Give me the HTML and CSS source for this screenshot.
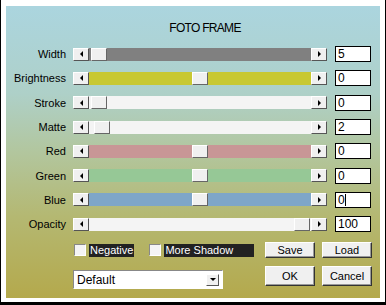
FILE: index.html
```html
<!DOCTYPE html>
<html lang="en">
<head>
    <meta charset="UTF-8">
    <title>Foto Frame</title>
    <link rel="stylesheet" href="styles.css">
</head>
<body>
    <div class="window">
        <div class="panel">
            <h1 class="title">FOTO FRAME</h1>
            <div class="rows">
                <div class="row">
                    <label>Width</label>
                    <div class="slider">
                        <span class="arrow left"></span>
                        <div class="track gray"><span class="thumb" style="left: 2px"></span></div>
                        <span class="arrow right"></span>
                    </div>
                    <div class="field">5</div>
                </div>
                <div class="row">
                    <label>Brightness</label>
                    <div class="slider">
                        <span class="arrow left"></span>
                        <div class="track yellow"><span class="thumb" style="left: 103px"></span></div>
                        <span class="arrow right"></span>
                    </div>
                    <div class="field">0</div>
                </div>
                <div class="row">
                    <label>Stroke</label>
                    <div class="slider">
                        <span class="arrow left"></span>
                        <div class="track white"><span class="thumb" style="left: 2px"></span></div>
                        <span class="arrow right"></span>
                    </div>
                    <div class="field">0</div>
                </div>
                <div class="row">
                    <label>Matte</label>
                    <div class="slider">
                        <span class="arrow left"></span>
                        <div class="track white"><span class="thumb" style="left: 5px"></span></div>
                        <span class="arrow right"></span>
                    </div>
                    <div class="field">2</div>
                </div>
                <div class="row">
                    <label>Red</label>
                    <div class="slider">
                        <span class="arrow left"></span>
                        <div class="track red"><span class="thumb" style="left: 103px"></span></div>
                        <span class="arrow right"></span>
                    </div>
                    <div class="field">0</div>
                </div>
                <div class="row">
                    <label>Green</label>
                    <div class="slider">
                        <span class="arrow left"></span>
                        <div class="track green"><span class="thumb" style="left: 103px"></span></div>
                        <span class="arrow right"></span>
                    </div>
                    <div class="field">0</div>
                </div>
                <div class="row">
                    <label>Blue</label>
                    <div class="slider">
                        <span class="arrow left"></span>
                        <div class="track blue"><span class="thumb" style="left: 103px"></span></div>
                        <span class="arrow right"></span>
                    </div>
                    <div class="field">0<span class="caret"></span></div>
                </div>
                <div class="row">
                    <label>Opacity</label>
                    <div class="slider">
                        <span class="arrow left"></span>
                        <div class="track white"><span class="thumb" style="left: 205px"></span></div>
                        <span class="arrow right"></span>
                    </div>
                    <div class="field">100</div>
                </div>
            </div>
            <div class="footer">
                <div class="checks">
                    <span class="box"></span><span class="check-label">Negative</span>
                    <span class="box second"></span><span class="check-label wide">More Shadow</span>
                </div>
                <button class="btn small">Save</button>
                <button class="btn small">Load</button>
                <div class="select">
                    <span>Default</span>
                    <span class="drop"></span>
                </div>
                <button class="btn">OK</button>
                <button class="btn">Cancel</button>
            </div>
        </div>
    </div>
</body>
</html>
```

FILE: styles.css
```css
/* General Styles */
body {
    margin: 0;
    background: #fff;
    font-family: 'Liberation Sans', Arial, sans-serif;
    font-size: 11px;
    color: #000;
}

.window {
    width: 386px;
    height: 305px;
    box-sizing: border-box;
    padding: 6px 5px 0 5px;
    border: 1px solid #000;
    border-top: none;
    border-bottom: 3px solid #000;
}

.panel {
    height: 292px;
    box-sizing: border-box;
    padding-top: 15px;
    background: linear-gradient(to bottom, #abd5df 0%, #aed0c8 30%, #b2c69e 50%, #b4b872 72%, #b4a94c 100%);
}

/* Title */
.title {
    margin: 0 0 7px 0;
    height: 14px;
    font-size: 12px;
    line-height: 14px;
    font-weight: normal;
    text-align: center;
    padding-left: 24px;
    letter-spacing: -0.7px;
}

/* Slider rows */
.row {
    display: grid;
    grid-template-columns: 60px 254px 37px;
    column-gap: 7px;
    align-items: center;
    height: 24.3px;
}

.row label {
    text-align: right;
    line-height: 14px;
}

.slider {
    display: flex;
    height: 13px;
}

.arrow {
    width: 16px;
    height: 13px;
    box-sizing: border-box;
    background: #f0f0f0;
    border: 1px solid;
    border-color: #fff #555 #555 #fff;
    display: flex;
    align-items: center;
    justify-content: center;
}

.arrow::after {
    content: "";
    border-top: 3px solid transparent;
    border-bottom: 3px solid transparent;
}

.arrow.left::after {
    border-right: 3px solid #000;
}

.arrow.right::after {
    border-left: 3px solid #000;
}

.track {
    flex: 1;
    position: relative;
}

.track.gray { background: #808080; }
.track.yellow { background: #c8c832; }
.track.white { background: #f4f4f4; }
.track.red { background: #c89696; }
.track.green { background: #96c896; }
.track.blue { background: #7ea6c8; }

.thumb {
    position: absolute;
    top: 0;
    width: 16px;
    height: 13px;
    box-sizing: border-box;
    background: #f0f0f0;
    border: 1px solid;
    border-color: #fff #666 #666 #fff;
}

.field {
    height: 16px;
    margin-left: 1px;
    box-sizing: border-box;
    background: #fff;
    border: 1px solid #000;
    padding-left: 2px;
    font-size: 12px;
    line-height: 14px;
    display: flex;
}

.caret {
    width: 1px;
    height: 12px;
    margin-top: 1px;
    background: #000;
}

/* Footer */
.footer {
    display: grid;
    grid-template-columns: 185px 50px 50px;
    grid-template-rows: 16px 20px;
    column-gap: 7px;
    row-gap: 8px;
    padding-left: 67px;
    margin-top: 6px;
}

.checks {
    display: flex;
    align-items: center;
    height: 16px;
}

.box {
    width: 12px;
    height: 12px;
    margin-left: 1px;
    box-sizing: border-box;
    background: #f4f4f4;
    border: 1px solid;
    border-color: #888 #fff #fff #888;
}

.box.second {
    margin-left: 15px;
}

.check-label {
    margin-left: 3px;
    padding: 0 1px;
    height: 13px;
    line-height: 13px;
    background: #222;
    color: #fff;
}

.check-label.wide {
    width: 88px;
}

.btn {
    margin: 0;
    padding: 0;
    font-family: inherit;
    font-size: 11px;
    background: #f0f0f0;
    border: 1px solid;
    border-color: #fff #333 #333 #fff;
    box-shadow: inset -1px -1px 0 #999;
    color: #000;
}

.select {
    margin-top: 4px;
    width: 150px;
    height: 19px;
    box-sizing: border-box;
    background: #fff;
    border: 1px solid;
    border-color: #888 #fff #fff #888;
    display: flex;
    align-items: center;
    justify-content: space-between;
    padding: 0 3px 0 3px;
    font-size: 12px;
}

.drop {
    width: 13px;
    height: 12px;
    box-sizing: border-box;
    background: #f0f0f0;
    border: 1px solid;
    border-color: #fff #555 #555 #fff;
    display: flex;
    align-items: center;
    justify-content: center;
}

.drop::after {
    content: "";
    border-left: 3px solid transparent;
    border-right: 3px solid transparent;
    border-top: 3px solid #000;
}
```
